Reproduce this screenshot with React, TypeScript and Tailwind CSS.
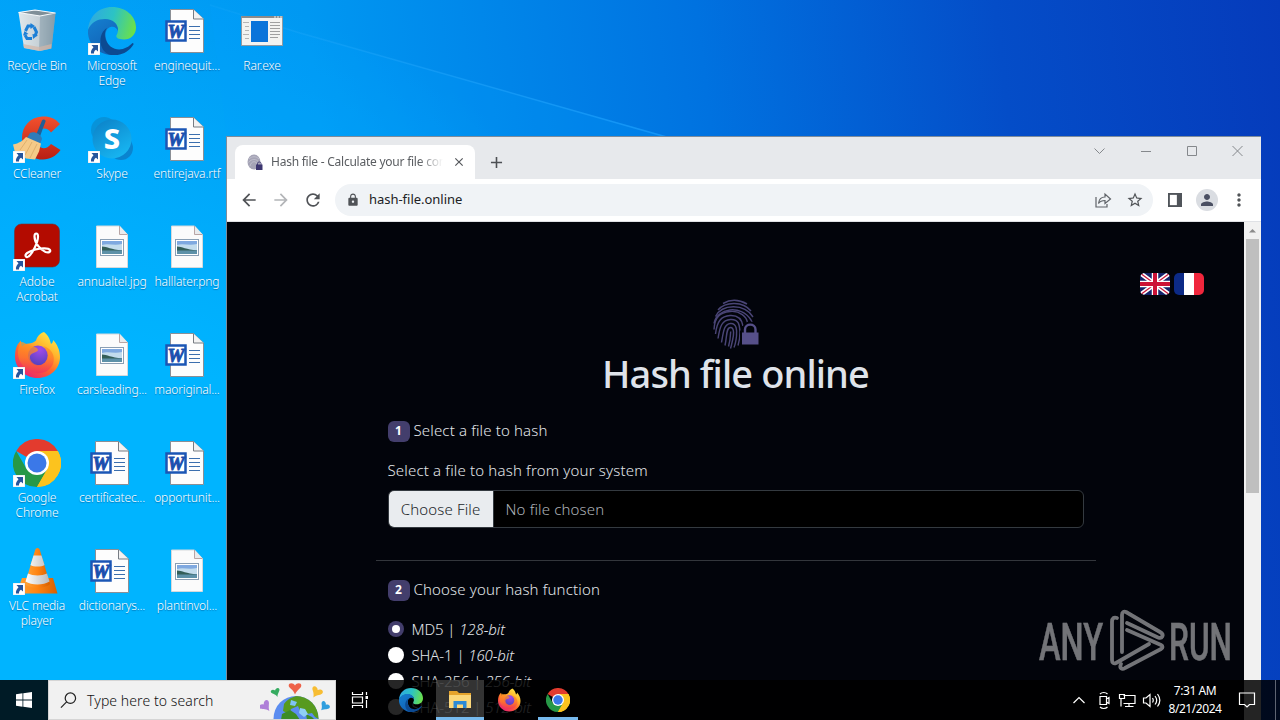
import React from 'react';
import { MdArrowBack, MdArrowForward, MdRefresh, MdLock, MdStarBorder, MdMoreVert, MdPerson, MdClose, MdAdd } from 'react-icons/md';

/* ---------- APP ICONS ---------- */

function Shortcut() {
  return (
    <svg viewBox="0 0 12 12" className="absolute left-0 bottom-0 w-3 h-3">
      <rect width="12" height="12" fill="#fff" stroke="#cfd8e0" strokeWidth=".6" />
      <path d="M3.500 2h6.500v6.500L8 6.700C6.300 7.700 5.900 8.800 6 10.500H3C2.600 8 3.700 6 5.500 4.200z" fill="#26559c" />
    </svg>
  );
}

function RecycleBin() {
  return (
    <svg viewBox="0 0 48 48" className="w-12 h-12">
      <defs>
        <linearGradient id="bin" x1="0" x2="1">
          <stop offset="0" stopColor="#dfe8ec" />
          <stop offset=".6" stopColor="#c5cfd5" />
          <stop offset="1" stopColor="#8fa0aa" />
        </linearGradient>
      </defs>
      <path d="M5.500 5.500L22 3l20.500 3-4 35.500L27 44l-16-3z" fill="url(#bin)" />
      <path d="M27 9l15.500-3-4 35.500L26 44z" fill="#8299a8" opacity=".55" />
      <path d="M5.500 5.500L22 3l20.500 3L27 9z" fill="#7f8f98" stroke="#f5f8fa" strokeWidth="1.200" />
      <path d="M10 37l16 3 12.500-3-.5 4.500L26 44l-15-3z" fill="#d3b6a8" opacity=".7" />
      <g fill="none" stroke="#1c7fd6" strokeWidth="3">
        <path d="M12.500 24l2.500-5h4" />
        <path d="M21 20l2.500 5-1.500 4" />
        <path d="M19 31.500h-5L12 28" />
      </g>
      <path d="M17.500 16l4.500 3-4.500 3zM25 28l-5 4-.5-5zM10 28.500l1.500-4.500 4 3z" fill="#1c7fd6" />
    </svg>
  );
}

function EdgeIcon({ className = 'w-12 h-12' }: { className?: string }) {
  return (
    <svg viewBox="0 0 48 48" className={className}>
      <defs>
        <linearGradient id="edgeTop" x1="0" y1=".3" x2="1" y2=".5">
          <stop offset="0" stopColor="#2fa8e2" />
          <stop offset=".5" stopColor="#2cc3c4" />
          <stop offset="1" stopColor="#6be04a" />
        </linearGradient>
        <linearGradient id="edgeLeft" x1="0" y1="0" x2=".6" y2="1">
          <stop offset="0" stopColor="#1580d0" />
          <stop offset="1" stopColor="#1160b4" />
        </linearGradient>
      </defs>
      <path d="M0 23C1 9 11 0 24 0c14 0 24 9.500 24 20.500C48 28 42.500 32.500 36 32.500c-6 0-8.500-2-7.500-4.200 3-4.500 2-12.500-7-15C13 11.500 4 15 0 23z" fill="url(#edgeTop)" />
      <path d="M0 23c3-8 10-11 17-11 9 0 13.500 6 13 12-1-3-4-5-7.500-4-6 2-6 10-3 16 3 5.500 8 9 14 8.500C29 48 24 48.500 18 47.300 7 44.500-1 34 0 23z" fill="url(#edgeLeft)" />
      <path d="M19 21c-4 5-2 14 3.500 18.500C30 45 39 42 44.500 36c1 0 1.300.8.8 1.700C40 46 30 50 21 47.500 11 44 9 27 19 21z" fill="#0c4a92" />
    </svg>
  );
}

function CCleaner() {
  return (
    <svg viewBox="0 0 48 48" className="w-12 h-12">
      <defs>
        <linearGradient id="cc" x1="0" y1="0" x2="0" y2="1">
          <stop offset="0" stopColor="#f2512e" />
          <stop offset="1" stopColor="#b81e13" />
        </linearGradient>
      </defs>
      <path d="M47 9C42 3 36 1 29 1.500 17 2.500 9 11 9 23c0 13 9 22 21 21.500 7 0 13-3.500 17.500-9.500L38 29c-3 4-7 5-10 3.500-4-2-5.500-5-5-10 .5-6 4-9 8-9 3 0 5 1.500 7 4z" fill="url(#cc)" />
      <path d="M29 5.500c1-2 4-1 3.500 1L26 24l-4-1.500z" fill="#225f96" />
      <path d="M17 18c4-2 11 1 12 6l-2.500 6L14 23z" fill="#2f7cba" />
      <path d="M13 22l15 6.500-2 8-4 8-9-1-5-4-6-2-2-8c6-1 10-4 13-7.500z" fill="#f5ca88" />
      <path d="M14 25l-7 10M19 27l-7 13M24 29l-7 14" stroke="#e0b06c" strokeWidth="1" />
    </svg>
  );
}

function Skype() {
  return (
    <svg viewBox="0 0 48 48" className="w-12 h-12">
      <defs>
        <linearGradient id="sky" x1="0" y1="0" x2=".6" y2="1">
          <stop offset="0" stopColor="#0b7fc6" />
          <stop offset="1" stopColor="#17b4f0" />
        </linearGradient>
      </defs>
      <circle cx="16" cy="15" r="13" fill="#0793da" />
      <circle cx="33" cy="33" r="12" fill="#0a84cf" />
      <circle cx="24" cy="24" r="19.500" fill="url(#sky)" />
      <text x="24" y="34" textAnchor="middle" fontFamily="Noto Sans" fontWeight="800" fontSize="29" fill="#fff">S</text>
    </svg>
  );
}

function WordDoc() {
  return (
    <svg viewBox="0 0 48 48" className="w-12 h-12">
      <path d="M7.500 2.500h23L40.500 12v33.500h-33z" fill="#fdfdfd" stroke="#8a8f96" />
      <path d="M30.500 2.500V12h10" fill="#f2f2f2" stroke="#777c83" />
      <path d="M26 20.500h11M26 24.500h11M26 28.500h11M26 32.500h11" transform="translate(0 -1)" stroke="#3c6fae" />
      <rect x="3.500" y="14.500" width="19" height="19" fill="#fff" stroke="#1b56b5" strokeWidth="2.500" />
      <text x="13" y="30.500" textAnchor="middle" fontFamily="Liberation Serif" fontWeight="700" fontStyle="italic" fontSize="18" textLength="17" lengthAdjust="spacingAndGlyphs" fill="#1b4fae" stroke="#1b4fae" strokeWidth=".9">W</text>
    </svg>
  );
}

function ImageDoc() {
  return (
    <svg viewBox="0 0 48 48" className="w-12 h-12">
      <path d="M8.500 3h23l8 8.500v33h-31z" fill="#fbfbfb" stroke="#d5d9dc" />
      <path d="M31.500 3v8.500h8" fill="#e9ebed" stroke="#b8a5a5" />
      <rect x="12.500" y="16.500" width="23" height="16" fill="#fff" stroke="#8a9fb4" />
      <rect x="14" y="18" width="20" height="13" fill="#7fa9e0" />
      <path d="M14 22c6-2 12 1 20-1v6H14z" fill="#c2dced" />
      <path d="M14 23.500c5 0 9 3 20 4V28H14z" fill="#335e58" />
      <path d="M14 27.500h20V31H14z" fill="#5d91a8" />
    </svg>
  );
}

function RarExe() {
  return (
    <svg viewBox="0 0 48 48" className="w-12 h-12">
      <rect x="3.500" y="9.500" width="41" height="29" fill="#f3f3f1" stroke="#8f9aa3" />
      <path d="M3.500 10h41" stroke="#8b8b8b" strokeWidth="2" />
      <path d="M36 10h2M39 10h2M42 10h2" stroke="#eee" />
      <rect x="13" y="14" width="17" height="21" fill="#0a74da" />
      <path d="M32 15.500h10M32 18.500h10M32 21.500h10M32 24.500h10M32 27.500h10M32 30.500h8" stroke="#a0a0a0" />
      <path d="M5 15.500h6M7 19.500h4M7 23.500h4M5 27.500h6M7 31.500h4" stroke="#b5b5b5" />
    </svg>
  );
}

function Acrobat() {
  return (
    <svg viewBox="0 0 48 48" className="w-12 h-12">
      <rect x="1.500" y="1" width="45" height="43" rx="7" fill="#b30b00" stroke="#6d3338" strokeWidth=".6" />
      <path d="M13 33.500c-2-2 2-5 9.500-7 6-1.500 13-1.500 14.500.5 1 2-1.500 3-4.500 2-5-2-11-9-11-15.500 0-4 3.500-4 3.500 0C25 20 19 31 15.500 33.500c-1 .8-2 .7-2.500 0z" fill="none" stroke="#fff" strokeWidth="2.200" />
    </svg>
  );
}

function FirefoxIcon({ className = 'w-12 h-12' }: { className?: string }) {
  return (
    <svg viewBox="0 0 48 48" className={className}>
      <defs>
        <linearGradient id="ff" x1=".85" y1="0" x2=".2" y2="1">
          <stop offset="0" stopColor="#fff04a" />
          <stop offset=".35" stopColor="#ffb32c" />
          <stop offset=".6" stopColor="#ff6a2b" />
          <stop offset="1" stopColor="#e8197a" />
        </linearGradient>
        <linearGradient id="ffTail" x1="0" y1="0" x2="0" y2="1">
          <stop offset="0" stopColor="#ff9a22" />
          <stop offset=".5" stopColor="#ff7a2a" />
          <stop offset="1" stopColor="#f0305e" />
        </linearGradient>
        <radialGradient id="ffGlobe" cx=".6" cy=".2" r=".9">
          <stop offset="0" stopColor="#a24bea" />
          <stop offset="1" stopColor="#4b40b8" />
        </radialGradient>
      </defs>
      <path d="M31 1c5 4 6 8 7 12 2-1 2-3 2-4 4 4 7 10 7 17 0 12-10 21-22.500 21S2 37 2 25.500C2 18 4 13 8 9.500c0 3 0 4 1 6 2-2 4-3 7-3 2 0 5-1 7-3C24 6 27 2 31 1z" fill="url(#ff)" />
      <circle cx="25" cy="24.500" r="10" fill="url(#ffGlobe)" />
      <path d="M8 11c3 0 5 2 8 3.500 5 1 9 2 9 4.500 0 2-5 2.500-7 4.500-2 2-1 6 2 8.500 5 4 12 2 14-4 2-5-1-10-4-13 8 2 13 9 10 18-3 7-10 10-17 9C12 40 5 31 5 22c0-5 1-8 3-11z" fill="url(#ffTail)" opacity=".75" />
    </svg>
  );
}

function ChromeIcon({ className = 'w-12 h-12' }: { className?: string }) {
  return (
    <svg viewBox="0 0 48 48" className={className}>
      <path d="M24 24L3.200 12A24 24 0 0 1 44.800 12z" fill="#e33b2e" />
      <path d="M24 24V12h20.800A24 24 0 0 1 24 48z" fill="#fcc31e" />
      <path d="M34.400 30L24 48A24 24 0 0 1 3.200 12L13.600 30z" fill="#279847" />
      <path d="M24 12h20.800A24 24 0 0 1 24 48l10.400-18z" fill="#fcc31e" />
      <circle cx="24" cy="24" r="12" fill="#fff" />
      <circle cx="24" cy="24" r="9.500" fill="#3b78e8" />
    </svg>
  );
}

function VlcIcon() {
  return (
    <svg viewBox="0 0 48 48" className="w-12 h-12">
      <defs>
        <linearGradient id="cone" x1="0" x2="1">
          <stop offset="0" stopColor="#ffa53a" />
          <stop offset=".5" stopColor="#ff8412" />
          <stop offset="1" stopColor="#d65f00" />
        </linearGradient>
        <linearGradient id="band" x1="0" x2="1">
          <stop offset="0" stopColor="#fff" />
          <stop offset="1" stopColor="#b9b9b9" />
        </linearGradient>
      </defs>
      <path d="M9 31h31l4.500 15.500h-41z" fill="url(#cone)" />
      <path d="M24.500 1c1.500 0 2 1 2.500 2.500L37 37c-5 5-20 5-25 0L22 3.500C22.500 2 23 1 24.500 1z" fill="url(#cone)" />
      <path d="M20.500 8.500h8l3 9.500c-3 2-11 2-14 0zM15 26.500c5 2.500 14 2.500 19 0l2.500 8c-6 4-18 4-24 0z" fill="url(#band)" />
    </svg>
  );
}

function Fingerprint({ className }: { className: string }) {
  return (
    <svg viewBox="0 0 46 50" className={className} fill="none" stroke="#4a4576" strokeWidth="1.450">
      <path d="M10 4.500C17 .5 26 .5 34 5" />
      <path d="M5 11C13 2 30 2.500 38 12" />
      <path d="M2.500 17.500C9 5 31 4 40 18" />
      <path d="M1 24.500C4 9 28 5 38 21l1 2" />
      <path d="M1 30.500C1.500 18 7 13.500 17 12.500S34 18 34.500 24" />
      <path d="M2.500 35C4 22 8.500 17 17 16.500S29 21 30 27" />
      <path d="M5 39.500C7 27 9 21 17.500 20.500S26.500 26 27 33c0 4-.5 9-2 13.500" />
      <path d="M8.500 43.500C10.500 32 11 25 17.500 24.500S24 32 23.500 37s-1 8-2.500 11.500" />
      <path d="M12 46.500c2-9 1-18 5.500-18s3 9 2 13-1 5-2 8" />
      <path d="M15.500 47.500c1.500-5 2-10 2.200-15" />
      <path d="M27 31.500h20v16H27z" fill="#02040b" stroke="none" />
      <path d="M32 34v-3.500c0-7 10-7 10 0V34" stroke="#02040b" strokeWidth="5.500" />
      <path d="M29 33.500h16.500v12H29z" fill="#565089" stroke="none" />
      <path d="M32 34v-3.500c0-6.500 10.500-6.500 10.500 0V34" stroke="#565089" strokeWidth="2.400" />
    </svg>
  );
}

/* ---------- DESKTOP ---------- */

const desktopItems = [
  { label: 'Recycle Bin', icon: <RecycleBin /> },
  { label: 'CCleaner', icon: <CCleaner />, shortcut: true },
  { label: 'Adobe Acrobat', icon: <Acrobat />, shortcut: true },
  { label: 'Firefox', icon: <FirefoxIcon />, shortcut: true },
  { label: 'Google Chrome', icon: <ChromeIcon />, shortcut: true },
  { label: 'VLC media player', icon: <VlcIcon />, shortcut: true },
  { label: 'Microsoft Edge', icon: <EdgeIcon />, shortcut: true },
  { label: 'Skype', icon: <Skype />, shortcut: true },
  { label: 'annualtel.jpg', icon: <ImageDoc /> },
  { label: 'carsleading...', icon: <ImageDoc /> },
  { label: 'certificatec...', icon: <WordDoc /> },
  { label: 'dictionarys...', icon: <WordDoc /> },
  { label: 'enginequit...', icon: <WordDoc /> },
  { label: 'entirejava.rtf', icon: <WordDoc /> },
  { label: 'halllater.png', icon: <ImageDoc /> },
  { label: 'maoriginal...', icon: <WordDoc /> },
  { label: 'opportunit...', icon: <WordDoc /> },
  { label: 'plantinvol...', icon: <ImageDoc /> },
  { label: 'Rar.exe', icon: <RarExe /> },
];

function DesktopItem({ icon, label, shortcut = false }: any) {
  return (
    <div className="flex flex-col items-center pt-[7px] -ml-px">
      <div className="relative w-12 h-12">
        {icon}
        {shortcut && <Shortcut />}
      </div>
      <span className="mt-[3px] w-[74px] text-center text-[12px] leading-[15px] tracking-[-0.12px] font-light text-white [text-shadow:0_1px_1px_rgba(0,40,90,0.45)]">{label}</span>
    </div>
  );
}

function Wallpaper() {
  return (
    <svg viewBox="0 0 1280 720" className="absolute inset-0 w-full h-full">
      <defs>
        <linearGradient id="sky1" gradientUnits="userSpaceOnUse" x1="0" y1="160" x2="1280" y2="0">
          <stop offset="0" stopColor="#00a3f9" />
          <stop offset=".25" stopColor="#0098f2" />
          <stop offset=".55" stopColor="#0072e0" />
          <stop offset=".78" stopColor="#044dc8" />
          <stop offset="1" stopColor="#053bbb" />
        </linearGradient>
        <radialGradient id="sky2" gradientUnits="userSpaceOnUse" cx="100" cy="600" r="620">
          <stop offset="0" stopColor="#00b4ff" />
          <stop offset=".4" stopColor="#00b4ff" />
          <stop offset="1" stopColor="#00b4ff" stopOpacity="0" />
        </radialGradient>
        <linearGradient id="ray" gradientUnits="userSpaceOnUse" x1="220" y1="0" x2="700" y2="140">
          <stop offset="0" stopColor="#3db8ff" stopOpacity=".1" />
          <stop offset="1" stopColor="#1ea0ff" stopOpacity=".65" />
        </linearGradient>
      </defs>
      <rect width="1280" height="720" fill="url(#sky1)" />
      <rect width="720" height="720" fill="url(#sky2)" />
      <path d="M210 5L300 33 670 137H227z" fill="#00a2ff" opacity=".2" />
      <path d="M210 5L300 33 670 138" fill="none" stroke="url(#ray)" strokeWidth="1.500" />
    </svg>
  );
}

/* ---------- BROWSER ---------- */

function BrowserWindow() {
  return (
    <div className="absolute left-[226px] top-[136px] w-[1035px] h-[600px] flex flex-col bg-white border-t border-l border-[#7d8c9c]">
      {/* tab strip */}
      <div className="h-[42px] flex bg-[#e7e9ec] pl-2 shrink-0">
        <div className="mt-2 w-60 h-[34px] rounded-t-lg bg-white flex items-center pl-3">
          <div className="relative w-4 h-4">
            <svg viewBox="0 0 16 16" className="w-4 h-4">
              <ellipse cx="7" cy="8" rx="6.500" ry="7.500" fill="#a5a4b6" />
              <path d="M2 5c3-3 7-3 10 0M1.500 8.500c3-4 8-4 10.500 0M3 12c1-5 6-6 8-1" stroke="#c9c8d4" strokeWidth=".7" fill="none" />
              <path d="M9 10.500h6.500V16H9z" fill="#3c3670" />
              <path d="M10.500 11V9.500c0-2 3.500-2 3.500 0V11" stroke="#3c3670" fill="none" />
            </svg>
          </div>
          <span className="ml-2 w-[172px] overflow-hidden whitespace-nowrap text-[12px] tracking-[-0.24px] text-[#5a5d61] [mask-image:linear-gradient(to_right,#000_86%,transparent)]">Hash file - Calculate your file con</span>
          <MdClose className="ml-[9px] w-[14px] h-[14px] text-[#54575b]" />
        </div>
        <MdAdd className="mt-4 ml-3 w-[19px] h-[19px] text-[#4c4f53]" />
        <svg viewBox="0 0 170 30" className="ml-auto mr-px w-[170px] h-[30px] fill-none stroke-[#85888c]">
          <path d="M4.500 11.500l5 5 5-5M51 14.500h10M97.500 9.500h9v9h-9zM142.500 9l10 10M152.500 9l-10 10" />
        </svg>
      </div>

      {/* toolbar */}
      <div className="h-[43px] flex items-center bg-white border-b border-[#dfe1e5] shrink-0">
        <MdArrowBack className="ml-3 w-5 h-5 text-[#505357]" />
        <MdArrowForward className="ml-3 w-5 h-5 text-[#b3b5b8]" />
        <MdRefresh className="ml-3 w-5 h-5 text-[#505357]" />
        <div className="ml-3 w-[818px] h-8 rounded-full bg-[#f0f3f6] flex items-center pl-[11px] pr-[9px]">
          <MdLock className="w-[14px] h-[14px] text-[#505357]" />
          <span className="ml-[9px] text-[13px] tracking-[-0.03px] text-[#202124]">hash-file.online</span>
          <svg viewBox="0 0 18 18" className="ml-auto w-[18px] h-[18px] fill-none stroke-[#5f6368]" strokeWidth="1.200">
            <path d="M2 6v10h11v-3" />
            <path d="M4.500 12.500C5 8 7.500 6 11 6V3l5.500 5-5.500 4.500V9.500c-3 0-5 .8-6.500 3z" />
          </svg>
          <MdStarBorder className="ml-[14px] w-[18px] h-[18px] text-[#505357]" />
        </div>
        <svg viewBox="0 0 15 15" className="ml-[15px] w-[14px] h-[14px]">
          <path d="M0 0h15v15H0z" fill="#50545a" />
          <path d="M2 2h7.500v11H2z" fill="#fff" />
        </svg>
        <div className="ml-[14px] w-[22px] h-[22px] rounded-full bg-[#dadde2] flex items-center justify-center">
          <MdPerson className="w-[18px] h-[18px] text-[#4a4f62]" />
        </div>
        <MdMoreVert className="ml-[11px] w-5 h-5 text-[#505357]" />
      </div>

      <div className="flex flex-1 min-h-0">
        <HashPage />
        <div className="w-[17px] bg-[#f1f1f1] flex flex-col items-center">
          <svg viewBox="0 0 17 17" className="w-[17px] h-[17px] shrink-0"><path d="M5 10.500h7L8.500 7z" fill="#8b8b8b" /></svg>
          <div className="w-[13px] h-[254px] bg-[#bfbfbf]" />
        </div>
      </div>
    </div>
  );
}

function StepTitle({ step, children }: { step: number; children: React.ReactNode }) {
  return (
    <div className="flex items-center h-6 text-[15px] tracking-[0.15px]">
      <span className="w-[22px] h-[21px] mr-1 rounded-md bg-[#433e6c] text-white text-[12px] font-bold flex items-center justify-center">{step}</span>
      <span className="-mt-0.5">{children}</span>
    </div>
  );
}

const hashes = [
  { name: 'MD5', bits: '128-bit' },
  { name: 'SHA-1', bits: '160-bit' },
  { name: 'SHA-256', bits: '256-bit' },
  { name: 'SHA-512', bits: '512-bit' },
];

function HashPage() {
  return (
    <div className="relative flex-1 bg-[#02040b] overflow-hidden text-[#e3e6ea] font-light">
      {/* language flags */}
      <div className="absolute right-10 top-[51px] flex gap-1">
        <svg viewBox="0 0 30 22" className="w-[30px] h-[22px] rounded-[5px]">
          <path d="M0 0h30v22H0z" fill="#14246b" />
          <path d="M0 0l30 22M30 0L0 22" stroke="#fff" strokeWidth="4.500" />
          <path d="M0 0l30 22M30 0L0 22" stroke="#c9173a" strokeWidth="1.300" />
          <path d="M15 0v22M0 11h30" stroke="#fff" strokeWidth="6.500" />
          <path d="M15 0v22M0 11h30" stroke="#cc1236" strokeWidth="4" />
        </svg>
        <svg viewBox="0 0 30 22" className="w-[30px] h-[22px] rounded-[5px]">
          <path d="M0 0h10v22H0z" fill="#0c2a86" />
          <path d="M10 0h10v22H10z" fill="#fff" />
          <path d="M20 0h10v22H20z" fill="#f0263c" />
        </svg>
      </div>

      <div className="w-[720px] mx-auto pt-[77px] flex flex-col">
        <Fingerprint className="w-[46px] h-[50px] mx-auto" />
        <h1 className="h-[48px] text-center text-[38px] leading-[48px] font-medium tracking-[-0.9px] text-[#dfe3ea]">Hash file online</h1>

        <div className="px-3 mt-[22px]">
          <StepTitle step={1}>Select a file to hash</StepTitle>
          <p className="mt-[15px] h-6 leading-6 text-[15px] tracking-[0.17px]">Select a file to hash from your system</p>
          <div className="mt-2 h-[38px] rounded-md border border-[#343a40] bg-black flex overflow-hidden text-[15px] tracking-[0.15px]">
            <span className="w-[105px] bg-[#e9ecef] text-[#212529] flex items-center justify-center border-r border-[#343a40]">Choose File</span>
            <span className="pl-3 flex items-center text-[#aeb3b8]">No file chosen</span>
          </div>
        </div>

        <div className="mt-8 border-t border-[#33363c]" />

        <div className="px-3 mt-[17px]">
          <StepTitle step={2}>Choose your hash function</StepTitle>
          <div className="mt-[14px]">
            {hashes.map((h, i) => (
              <label key={h.name} className="flex items-center h-[26px] text-[15px] tracking-[-0.1px] whitespace-pre">
                <span className={`w-4 h-4 mr-2 rounded-full flex items-center justify-center ${i === 0 ? 'bg-[#433e6c]' : 'bg-white'}`}>
                  {i === 0 && <span className="w-2 h-2 rounded-full bg-white" />}
                </span>
                {h.name} | <em>{h.bits}</em>
              </label>
            ))}
          </div>
        </div>
      </div>
    </div>
  );
}

/* ---------- TASKBAR ---------- */

function Taskbar() {
  return (
    <div className="absolute left-0 bottom-0 w-full h-10 bg-black/85 flex text-white">
      <div className="w-12 flex items-center justify-center">
        <svg viewBox="0 0 16 16" className="w-4 h-4" fill="#fff">
          <path d="M0 2.200L6.500 1.300V7.500H0zM7.300 1.200L16 0v7.500H7.300zM0 8.500h6.500v6.200L0 13.800zM7.300 8.500H16V16l-8.700-1.200z" />
        </svg>
      </div>
      <div className="w-72 bg-[#f1f1f1] border border-[#d5d5d5] flex items-center text-[#303030] overflow-hidden">
        <svg viewBox="0 0 18 18" className="ml-[11px] w-[17px] h-[17px] fill-none stroke-[#222]" strokeWidth="1.300">
          <circle cx="11" cy="6.500" r="5.500" />
          <path d="M7 10.500L1 16.500" />
        </svg>
        <span className="ml-[10px] text-[14px] tracking-[0.08px] font-light text-[#111]">Type here to search</span>
        <SearchHighlight />
      </div>

      <div className="w-12 flex items-center justify-center">
        <svg viewBox="0 0 18 16" className="w-[18px] h-4 fill-none stroke-white" strokeWidth="1.200">
          <path d="M1.500 0v2.500h10V0M1.500 5h10v6h-10zM1.500 16v-2.500h10V16M15.500 0v3M15.500 8v8" />
          <path d="M14.500 4h2.500v3h-2.500z" fill="#fff" stroke="none" />
        </svg>
      </div>
      <div className="w-[52px] pl-[2px] flex items-center justify-center"><EdgeIcon className="w-6 h-6" /></div>
      <div className="w-12 flex items-center justify-center bg-white/20 border-b-3 border-[#76b9ed]">
        <svg viewBox="0 0 22 20" className="w-[22px] h-5 mt-[3px]">
          <path d="M0 1h8l2 2h12v15H0z" fill="#e5a32c" />
          <path d="M0 5h22v13H0z" fill="#fbd77a" />
          <path d="M4.500 18v-7h13v7h-3.500v-3.500H8V18z" fill="#2c8ad6" />
        </svg>
      </div>
      <div className="w-[50px] flex items-center justify-center"><FirefoxIcon className="w-6 h-6" /></div>
      <div className="ml-1 w-10 flex items-center justify-center border-b-3 border-[#76b9ed]"><ChromeIcon className="w-6 h-6 mt-[3px]" /></div>

      {/* tray */}
      <div className="ml-auto flex items-center">
        <svg viewBox="0 0 90 20" className="w-[90px] h-5 fill-none stroke-white" strokeWidth="1.200">
          <path d="M1.500 13l5.500-5.500L12.500 13" />
          <path d="M28 6.500h6.500v8H28zM34.500 9l2.500-1.500v6L34.500 12M28 4c2-2 5.500-2 7.500 0M28 17c2 2 5.500 2 7.500 0" />
          <path d="M51.500 5.500H63v8H51.500M57 13.500v3M53 16.500h8.500M47.500 4.500h5v4h-5zM49 8.500v8" />
          <path d="M71.500 8h2.500l4-3.500v12L74 13h-2.500zM80.500 8c1 1.500 1 3 0 4.500M83 6c2 2.500 2 6 0 8.500M85.500 4c3 4 3 8.500 0 12.500" />
        </svg>
        <div className="w-[66px] text-center text-[12px] leading-[18px] tracking-[-0.45px]">
          <div>7:31 AM</div>
          <div>8/21/2024</div>
        </div>
        <svg viewBox="0 0 18 18" className="ml-[10px] w-[18px] h-[18px] fill-none stroke-white" strokeWidth="1.200">
          <path d="M1.500 2h15v11.500h-5L9 16l-2.500-2.500h-5z" />
        </svg>
        <div className="ml-[19px] mr-1 w-px h-10 bg-[#5e6472]" />
      </div>
    </div>
  );
}

function SearchHighlight() {
  return (
    <svg viewBox="0 0 72 38" className="ml-auto mr-[3px] w-[72px] h-[38px]">
      <defs>
        <path id="heart" d="M0 5.500C-2-.5 -6-.5 -6-3.500-6-6.500-1.500-6.500 0-3.500 1.500-6.500 6-6.500 6-3.500 6-.5 2 .5 0 5.500z" />
        <clipPath id="globe"><circle cx="36" cy="37.500" r="22.500" /></clipPath>
      </defs>
      <circle cx="36" cy="37.500" r="22.500" fill="#5b8df0" />
      <g clipPath="url(#globe)">
        <path d="M24 23c4-6 12-9 19-8l7 3 5 6 4 7 1 8-5-3-3-4-5 1-2-4-5 1-2-5-7 3-2 5-6-3z" fill="#579a1f" />
        <path d="M22 33l8-4 6 4 4 6H21zM46 33l6 3 3 3h-8z" fill="#3c8c24" />
        <path d="M31 19l6 2-2 4-5-1z" fill="#7fc4f3" />
        <path d="M40 27l5 1 3 5-4 3-5-4z" fill="#8fd0f5" />
      </g>
      <use href="#heart" fill="#ee6148" transform="translate(35 8) scale(1.050 1)" />
      <use href="#heart" fill="#35ab60" transform="translate(16 12) scale(.75) rotate(-20)" />
      <use href="#heart" fill="#f7bd33" transform="translate(56 12) scale(.95) rotate(30)" />
      <use href="#heart" fill="#af7fd8" transform="translate(6 26) scale(.95) rotate(-40)" />
      <use href="#heart" fill="#2f9ede" transform="translate(64 26) scale(.8) rotate(40)" />
    </svg>
  );
}

/* ---------- WATERMARK ---------- */

function Watermark() {
  return (
    <svg viewBox="0 0 208 70" className="absolute left-[1035px] top-[606px] w-[208px] h-[70px] opacity-50">
      <g fill="#e4e4e4" stroke="#e4e4e4" strokeWidth=".5" fontFamily="Roboto" fontSize="52" fontWeight="500">
        <text x="4" y="53.500" textLength="64" lengthAdjust="spacingAndGlyphs">ANY</text>
        <text x="134" y="53.500" textLength="63" lengthAdjust="spacingAndGlyphs">RUN</text>
      </g>
      <g fill="none" stroke="#e4e4e4" strokeWidth="3.800" strokeLinecap="round" strokeLinejoin="round">
        <path d="M87 46V9c0-3 2-4 4-3l34 20c5 3 2 7-2 5.500L92 17" />
        <path d="M82 12c-3-1-5 0-5 4v38c0 3 2 4 4 3l33-19" />
        <path d="M92 24l34 15c2 1 2 3 0 4L90 62c-3 2-6 0-4-4" />
      </g>
    </svg>
  );
}

export default function App() {
  return (
    <div className="relative w-[1280px] h-[720px] overflow-hidden font-['Noto_Sans','Open_Sans',sans-serif]">
      <Wallpaper />
      <div className="relative w-[300px] grid grid-flow-col grid-rows-[repeat(6,108px)] grid-cols-[repeat(4,75px)]">
        {desktopItems.map((item) => <DesktopItem key={item.label} {...item} />)}
      </div>
      <BrowserWindow />
      <Taskbar />
      <Watermark />
    </div>
  );
}
